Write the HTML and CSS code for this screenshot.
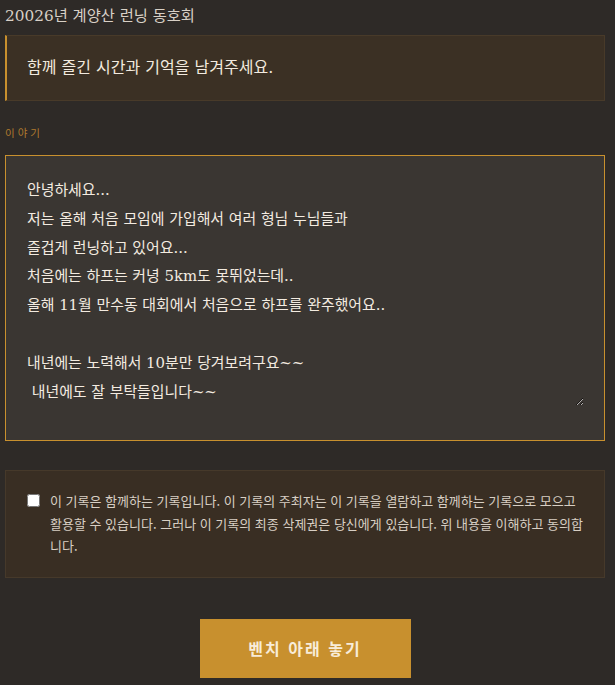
FILE: index.html
```html
<!DOCTYPE html>
<html lang="ko">
<head>
<meta charset="utf-8">
<title>20026년 계양산 런닝 동호회</title>
<link rel="stylesheet" href="styles.css">
</head>
<body>
<main class="page">
  <h1 class="title">20026년 계양산 런닝 동호회</h1>
  <div class="notice">함께 즐긴 시간과 기억을 남겨주세요.</div>
  <label class="label" for="story">이야기</label>
  <div class="story-box">
    <textarea id="story" class="story">안녕하세요...
저는 올해 처음 모임에 가입해서 여러 형님 누님들과
즐겁게 런닝하고 있어요...
처음에는 하프는 커녕 5km도 못뛰었는데..
올해 11월 만수동 대회에서 처음으로 하프를 완주했어요..

내년에는 노력해서 10분만 당겨보려구요~~
 내년에도 잘 부탁들입니다~~</textarea>
  </div>
  <div class="consent">
    <input type="checkbox" class="consent-check" id="agree">
    <label class="consent-text" for="agree">이 기록은 함께하는 기록입니다. 이 기록의 주최자는 이 기록을 열람하고 함께하는 기록으로 모으고 활용할 수 있습니다. 그러나 이 기록의 최종 삭제권은 당신에게 있습니다. 위 내용을 이해하고 동의합니다.</label>
  </div>
  <div class="actions">
    <button class="submit" type="button">벤치 아래 놓기</button>
  </div>
</main>
</body>
</html>
```
FILE: styles.css
```css
html, body {
  margin: 0;
  padding: 0;
  background: #2e2a27;
}
body {
  font-family: "DejaVu Serif", "Noto Sans CJK KR", serif;
  color: #f0e8dd;
}
.page {
  padding: 0 10px 0 5px;
  display: flex;
  flex-direction: column;
}
.title {
  margin: 0;
  padding: 5px 0 8px;
  font-size: 15.3px;
  line-height: 22px;
  font-weight: normal;
  color: #d8d0c6;
}
.notice {
  background: #3b3024;
  border: 1px solid #483a29;
  border-left: 2px solid #c8902e;
  padding: 20px 20px 20px 20px;
  font-size: 16px;
  line-height: 24px;
  color: #f2eadf;
}
.label {
  margin-top: 25px;
  font-family: "Noto Sans CJK KR", sans-serif;
  font-size: 10.5px;
  line-height: 14px;
  letter-spacing: 3px;
  color: #b07a2e;
}
.story-box {
  margin-top: 15px;
  background: #3a3632;
  border: 1px solid #c8902e;
  padding: 20px 20px 34px 20px;
}
.story {
  display: block;
  box-sizing: border-box;
  width: 100%;
  height: 230px;
  margin: 0;
  padding: 0 1px;
  border: none;
  outline: none;
  background: transparent;
  color: #f3ebe0;
  font-family: "DejaVu Serif", "Noto Sans CJK KR", serif;
  font-size: 14.9px;
  line-height: 28.8px;
  resize: vertical;
}
.consent {
  margin-top: 29px;
  background: #392e23;
  border: 1px solid #46392a;
  padding: 19px 18px 19px 21px;
  display: flex;
  align-items: flex-start;
  gap: 10px;
}
.consent-check {
  flex: none;
  width: 13px;
  height: 13px;
  margin: 4px 0 0 0;
}
.consent-text {
  font-family: "Noto Sans CJK KR", sans-serif;
  font-size: 13px;
  line-height: 22.5px;
  color: #d8cfc4;
}
.actions {
  display: flex;
  justify-content: center;
  margin-top: 41px;
}
.submit {
  width: 211px;
  height: 59px;
  border: none;
  background: #c8902e;
  color: #f8ecd9;
  font-family: "Noto Sans CJK KR", sans-serif;
  font-size: 16px;
  font-weight: 600;
  letter-spacing: 2px;
  cursor: pointer;
}
```
